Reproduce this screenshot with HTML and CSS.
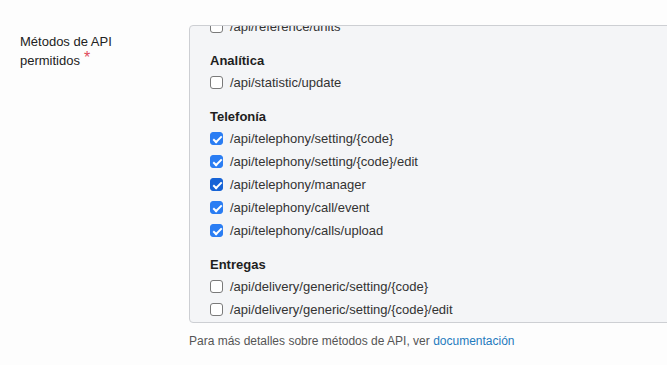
FILE: index.html
```html
<!DOCTYPE html>
<html lang="es">
<head>
<meta charset="utf-8">
<title>Métodos de API permitidos</title>
<link rel="stylesheet" href="styles.css">
</head>
<body>
<div class="form-row">
  <div class="label">Métodos de API permitidos<span class="req">*</span></div>
  <div class="field">
    <div class="box">
      <div class="list">
        <div class="group">
          <label class="item"><span class="cb"></span>/api/reference/units</label>
        </div>
        <div class="group">
          <div class="heading">Analítica</div>
          <label class="item"><span class="cb"></span>/api/statistic/update</label>
        </div>
        <div class="group">
          <div class="heading">Telefonía</div>
          <label class="item"><span class="cb on"></span>/api/telephony/setting/{code}</label>
          <label class="item"><span class="cb on"></span>/api/telephony/setting/{code}/edit</label>
          <label class="item"><span class="cb on dark"></span>/api/telephony/manager</label>
          <label class="item"><span class="cb on"></span>/api/telephony/call/event</label>
          <label class="item"><span class="cb on"></span>/api/telephony/calls/upload</label>
        </div>
        <div class="group">
          <div class="heading">Entregas</div>
          <label class="item"><span class="cb"></span>/api/delivery/generic/setting/{code}</label>
          <label class="item"><span class="cb"></span>/api/delivery/generic/setting/{code}/edit</label>
        </div>
      </div>
    </div>
    <div class="help">Para más detalles sobre métodos de API, ver <a href="#">documentación</a></div>
  </div>
</div>
</body>
</html>
```
FILE: styles.css
```css
html, body {
  margin: 0;
  padding: 0;
  background: #fdfdfd;
  overflow: hidden;
  font-family: "Liberation Sans", Arial, Helvetica, sans-serif;
  color: #222;
}
.form-row {
  display: flex;
  padding: 25px 0 0 20px;
}
.label {
  flex: 0 0 169px;
  box-sizing: border-box;
  padding: 7px 19px 0 0;
  font-size: 13px;
  line-height: 19px;
  color: #222;
}
.req {
  color: #e04a5a;
  margin-left: 4px;
  position: relative;
  top: -2px;
  font-size: 16px;
  line-height: 10px;
}
.field {
  flex: 0 0 520px;
}
.box {
  height: 296px;
  overflow: hidden;
  border: 1px solid #cdcfd3;
  border-radius: 4px;
  background: #f4f5f7;
  padding: 0 20px;
}
.list {
  margin-top: -11px;
}
.group + .group {
  margin-top: 13px;
}
.heading {
  font-weight: bold;
  font-size: 13px;
  line-height: 20px;
  color: #1e1e1e;
}
.item {
  display: flex;
  align-items: center;
  height: 23px;
  font-size: 13px;
  color: #333;
  gap: 7px;
}
.cb {
  width: 13px;
  height: 13px;
  box-sizing: border-box;
  border: 1px solid #7a7a7a;
  border-radius: 3px;
  background: #fff;
  flex: none;
  position: relative;
}
.cb.on {
  background: #2a7df3;
  border-color: #2a7df3;
}
.cb.on.dark {
  background: #1663d6;
  border-color: #1663d6;
}
.cb.on::after {
  content: "";
  position: absolute;
  left: 3.5px;
  top: 0.5px;
  width: 3px;
  height: 7px;
  border: solid #fff;
  border-width: 0 2px 2px 0;
  transform: rotate(45deg);
}
.help {
  margin-top: 9px;
  font-size: 12px;
  line-height: 18px;
  color: #555;
}
.help a {
  color: #1f7bbd;
  text-decoration: none;
}
```
